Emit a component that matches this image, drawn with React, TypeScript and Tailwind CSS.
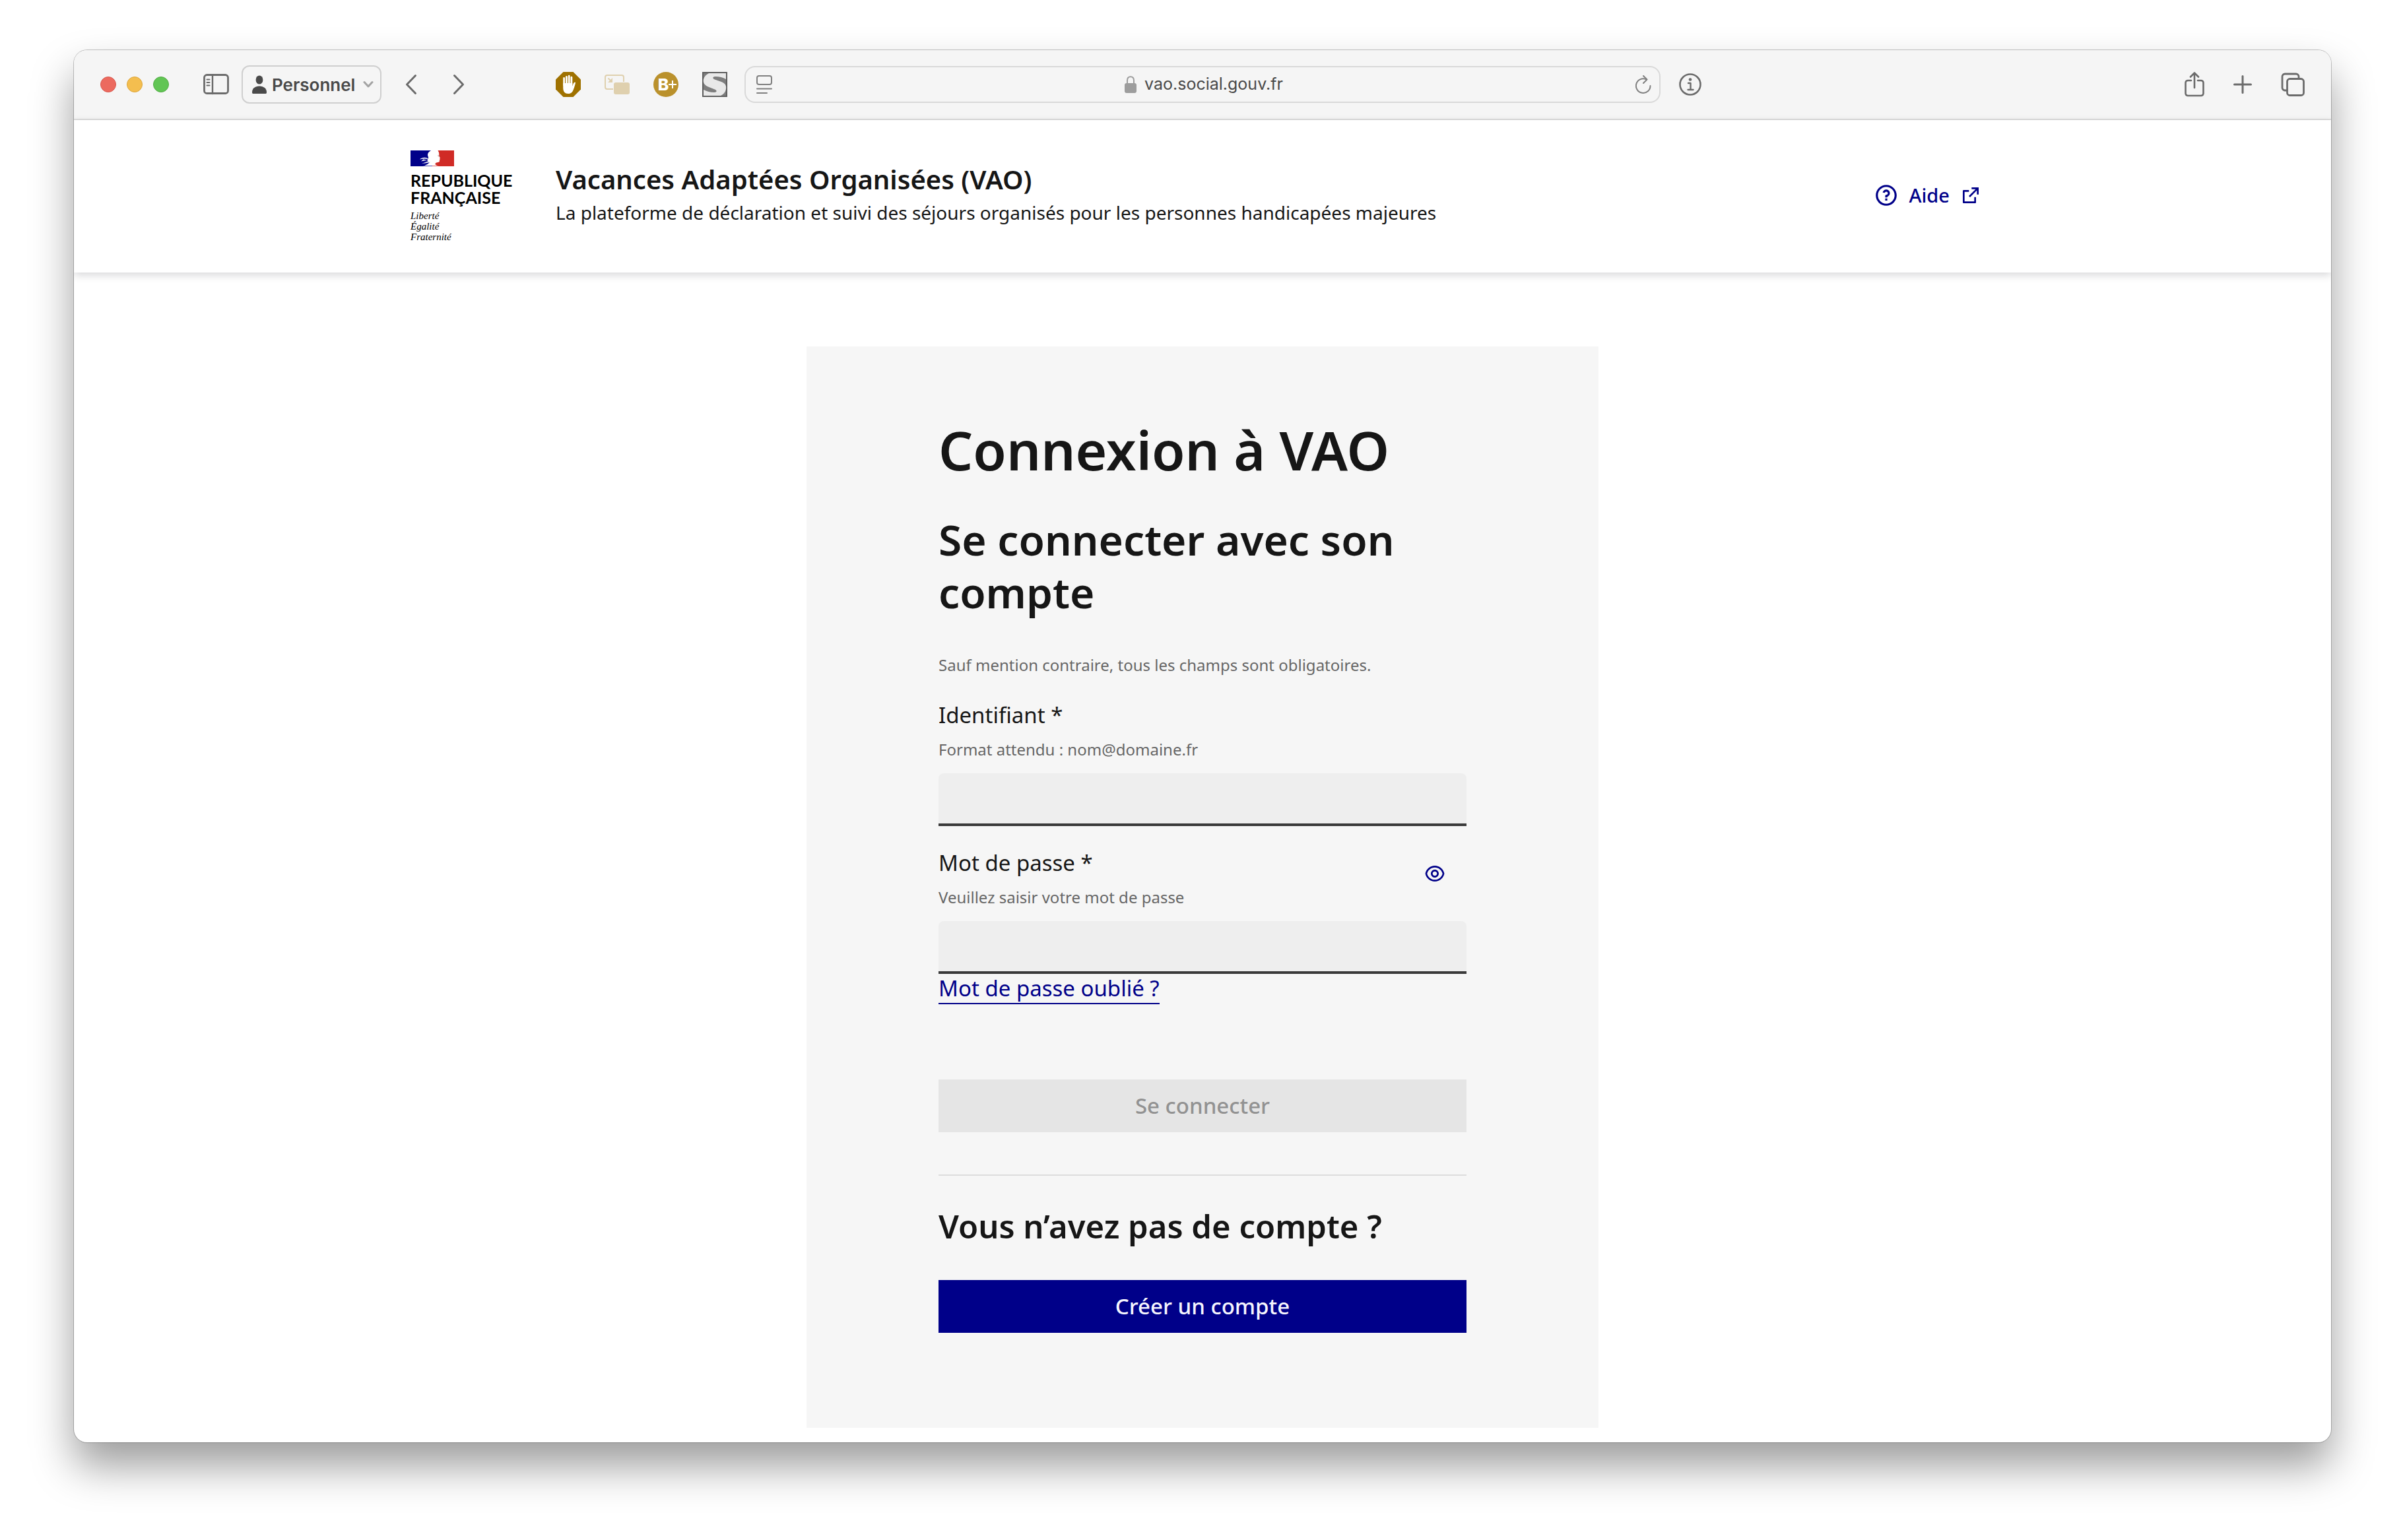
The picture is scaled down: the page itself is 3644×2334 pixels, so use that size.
import React, { useState } from "react";
import { RiEyeLine, RiQuestionLine, RiExternalLinkLine } from "react-icons/ri";

const stroke = {
  fill: "none",
  stroke: "currentColor",
  strokeLinecap: "round" as const,
  strokeLinejoin: "round" as const,
};

function SidebarIcon() {
  return (
    <svg width="40" height="38" viewBox="0 0 40 38" {...stroke} strokeWidth="2.800">
      <rect x="1.500" y="1.500" width="37" height="35" rx="4" />
      <path d="M14 2V36" strokeWidth="2.400" />
      <path d="M5.500 10.500H10M5.500 15.500H10M5.500 20.500H10" strokeWidth="2" />
    </svg>
  );
}

function PersonIcon() {
  return (
    <svg width="22" height="28" viewBox="0 0 22 28" fill="currentColor">
      <ellipse cx="11" cy="7" rx="5.400" ry="6.600" />
      <path d="M0 26C0 20 4.500 16.500 11 16.500S22 20 22 26C22 27.400 21.400 28 20 28H2C.6 28 0 27.400 0 26Z" />
    </svg>
  );
}

function AdBlockIcon() {
  return (
    <svg width="38" height="38" viewBox="0 0 38 38">
      <path d="M11.500 0H26.500L38 11.500V26.500L26.500 38H11.500L0 26.500V11.500Z" fill="#9f7100" />
      <g stroke="#fff" strokeWidth="2.800" strokeLinecap="round">
        <path d="M12.600 20V9.500M16.400 18V7.500M20.200 18V6.200M23.900 19V8.200" />
      </g>
      <path
        d="M11.200 17H25.300V21.500L26.800 17.500C27.500 16 29 15.300 30 16C29.700 19 28 24 26.500 27.500C25 31.500 22.500 33 18.800 33C14 33 11.200 30 11.200 24Z"
        fill="#fff"
      />
    </svg>
  );
}

function PipIcon() {
  return (
    <svg width="38" height="30" viewBox="0 0 38 30">
      <path
        d="M13 22H4A3 3 0 0 1 1 19V4A3 3 0 0 1 4 1H26A3 3 0 0 1 29 4V11"
        fill="none"
        stroke="#dfd0ae"
        strokeWidth="2"
      />
      <path d="M5.500 5.500L10 10" stroke="#dfd0ae" strokeWidth="2" />
      <path d="M12 5V12H5Z" fill="#dfd0ae" />
      <rect x="14" y="12" width="24" height="18" rx="3" fill="#dfd0ae" />
    </svg>
  );
}

function StylusIcon() {
  return (
    <svg width="38" height="38" viewBox="0 0 38 38">
      <rect x="1" y="1" width="36" height="36" fill="#7e7e7e" stroke="#5e5e5e" strokeWidth="2" />
      <path
        d="M10 2H36V11C31 8 24 6.500 19 7C15.500 7.500 15.500 10 19 11.500L29 15C35 17.500 37 21 36 26C35 31 32 34 28 36H2V27C8 30 14 31.500 19 31C22.500 30.500 22.500 28 19 26.500L9 22.500C3 20 1 16 2 11C3 7 6 4 10 2Z"
        fill="#e9e9e9"
      />
    </svg>
  );
}

function ReaderIcon() {
  return (
    <svg width="24" height="28" viewBox="0 0 24 28" {...stroke} strokeWidth="2">
      <rect x="1" y="1" width="22" height="13" rx="3" />
      <path d="M1 20.500H23M1 27H16" />
    </svg>
  );
}

function LockIcon() {
  return (
    <svg width="18" height="26" viewBox="0 0 18 26">
      <path d="M4 12V7C4 3.500 6 1.200 9 1.200S14 3.500 14 7V12" fill="none" stroke="#9d9d9d" strokeWidth="2" />
      <rect x="0" y="11" width="18" height="15" rx="3" fill="#9d9d9d" />
    </svg>
  );
}

function ReloadIcon() {
  return (
    <svg width="24" height="28" viewBox="0 0 24 28" {...stroke} strokeWidth="2">
      <path d="M22.500 16A10.800 10.800 0 1 1 16 6.200" />
      <path d="M12 1L17.500 6.500L12 12" />
    </svg>
  );
}

function InfoIcon() {
  return (
    <svg width="34" height="34" viewBox="0 0 34 34" {...stroke} strokeWidth="2.600">
      <circle cx="17" cy="17" r="15.500" />
      <circle cx="17" cy="9.500" r="2.300" fill="currentColor" stroke="none" />
      <path d="M14 15H17.500V25M13.500 25H21.500" strokeWidth="2.400" />
    </svg>
  );
}

function ShareIcon() {
  return (
    <svg width="30" height="38" viewBox="0 0 30 38" {...stroke} strokeWidth="2.600">
      <path d="M10 13H5A3.500 3.500 0 0 0 1.500 16.500V32.500A3.500 3.500 0 0 0 5 36H25A3.500 3.500 0 0 0 28.500 32.500V16.500A3.500 3.500 0 0 0 25 13H20" />
      <path d="M15 24V2M9 7.500L15 1.500L21 7.500" />
    </svg>
  );
}

function PlusIcon() {
  return (
    <svg width="28" height="28" viewBox="0 0 28 28" {...stroke} strokeWidth="3">
      <path d="M14 1.500V26.500M1.500 14H26.500" />
    </svg>
  );
}

function TabsIcon() {
  return (
    <svg width="36" height="36" viewBox="0 0 36 36" {...stroke} strokeWidth="2.800">
      <path d="M9 27H6A4 4 0 0 1 2 23V6A4 4 0 0 1 6 2H23A4 4 0 0 1 27 6V9" />
      <rect x="9.500" y="9.500" width="25" height="25" rx="4" />
    </svg>
  );
}

function RepublicFlag() {
  return (
    <svg width="66" height="24" viewBox="0 0 66 24">
      <path d="M0 0H31C28.500 1.500 26 3.500 26 6.500C26 9 27.500 10 27 12L25 15L29.500 17.500L27 21L19 24H0Z" fill="#000089" />
      <path d="M41.500 0H66V24H43C40.500 22.500 37 22 37.500 20.500C37.500 19 39 18.300 42.500 17.800C43.800 17.500 44 16.500 43.800 15.500L44.600 13.500L44 12.500L45 11.800L43.200 8.500C43.500 5.500 43.500 3 41.500 0Z" fill="#d02b26" />
      <path d="M14 13.500C17 10.800 21 10.200 25.500 11.500L27 13L22 12.500C19.500 12.400 17 12.800 14 13.500Z" fill="#fff" />
      <path d="M16 16.500L19.500 13.500L25 15L20.500 15.500ZM16.500 19.500C21 19 24 17 29 15.500L29.500 18C25 18.500 21 20 16.500 19.500Z" fill="#fff" />
      <path d="M19 24C22 22.500 26 21.500 29 18L30 23.200Z" fill="#fff" />
      <path d="M19 23.600H33" stroke="#000089" strokeWidth=".8" />
      <path d="M33 23.600H44" stroke="#d02b26" strokeWidth=".8" />
      <path d="M41.200 7.800H43M41.800 9H42.800" stroke="#8a8a8a" strokeWidth=".7" />
    </svg>
  );
}

function Toolbar() {
  return (
    <div className="flex h-[106px] items-center border-b-2 border-[#dcdcdc] bg-[#f5f5f5] px-10 text-[#6b6b6b]">
      <div className="flex flex-1 items-center">
        <div className="flex gap-4">
          <button aria-label="Fermer" className="size-6 rounded-full border border-[#d8584e] bg-[#ec6a5f]" />
          <button aria-label="Réduire" className="size-6 rounded-full border border-[#dca63c] bg-[#f4be4f]" />
          <button aria-label="Agrandir" className="size-6 rounded-full border border-[#52ab45] bg-[#61c554]" />
        </div>
        <button aria-label="Barre latérale" className="ml-[52px]">
          <svg width="40" height="32" viewBox="0 0 40 32" {...stroke} strokeWidth="2.800">
            <rect x="1.500" y="1.500" width="36" height="28" rx="4" />
            <path d="M14 2V30" strokeWidth="2.400" />
            <path d="M5.500 8.500H9.500M5.500 13H9.500M5.500 17.500H9.500" strokeWidth="2" />
          </svg>
        </button>
        <button className="ml-[18px] flex h-[58px] items-center rounded-xl border-2 border-[#cfcfcf] pr-[10px] pl-[14px] text-[26px] font-semibold text-[#4a4a4a]">
          <PersonIcon />
          <span className="mr-3 ml-2">Personnel</span>
          <svg width="16" height="12" viewBox="0 0 16 12" {...stroke} strokeWidth="3" className="text-[#a3a3a3]">
            <path d="M2 2.500L8 9L14 2.500" />
          </svg>
        </button>
        <button aria-label="Précédent" className="ml-9">
          <svg width="18" height="32" viewBox="0 0 18 32" {...stroke} strokeWidth="3">
            <path d="M15.500 2.500L2.500 16L15.500 29.500" />
          </svg>
        </button>
        <button aria-label="Suivant" className="ml-[54px]">
          <svg width="18" height="32" viewBox="0 0 18 32" {...stroke} strokeWidth="3">
            <path d="M2.500 2.500L15.500 16L2.500 29.500" />
          </svg>
        </button>
        <div className="mr-[26px] ml-auto flex items-center gap-9">
          <button aria-label="Bloqueur de publicité">
            <AdBlockIcon />
          </button>
          <button aria-label="Image dans l’image">
            <PipIcon />
          </button>
          <button
            aria-label="Extension B+"
            className="flex size-[38px] items-center justify-center rounded-full bg-[#ba912c] pl-1 text-[25px] leading-none font-extrabold text-white"
          >
            <span>B</span>
            <svg width="12" height="12" viewBox="0 0 12 12" stroke="#fff" strokeWidth="2">
              <path d="M6 0V12M0 6H12" />
            </svg>
          </button>
          <button aria-label="Extension de styles">
            <StylusIcon />
          </button>
        </div>
      </div>
      <div className="flex h-14 w-[1388px] items-center rounded-2xl border-2 border-[#d9d9d9] pr-3 pl-4 text-[#808080]">
        <button aria-label="Lecteur">
          <ReaderIcon />
        </button>
        <div className="flex flex-1 items-center justify-center gap-3">
          <LockIcon />
          <span className="text-[25px] text-[#4a4a4a]">vao.social.gouv.fr</span>
        </div>
        <button aria-label="Actualiser">
          <ReloadIcon />
        </button>
      </div>
      <div className="flex flex-1 items-center">
        <button aria-label="Informations" className="mr-auto ml-7">
          <InfoIcon />
        </button>
        <div className="flex items-center gap-11">
          <button aria-label="Partager">
            <ShareIcon />
          </button>
          <button aria-label="Nouvel onglet">
            <PlusIcon />
          </button>
          <button aria-label="Onglets">
            <TabsIcon />
          </button>
        </div>
      </div>
    </div>
  );
}

function SiteHeader() {
  return (
    <header className="bg-white py-[46px] shadow-[0_4px_12px_rgba(0,0,18,0.16)]">
      <div className="mx-auto flex max-w-[2400px] items-center">
        <div className="w-[220px] shrink-0 text-black">
          <RepublicFlag />
          <p className="mt-2 font-[Lato,sans-serif] text-[25px] leading-[26px] font-bold">
            REPUBLIQUE
            <br />
            FRANÇAISE
          </p>
          <p className="mt-[7px] font-['Liberation_Serif',serif] text-[15px] leading-4 italic">
            Liberté
            <br />
            Égalité
            <br />
            Fraternité
          </p>
        </div>
        <div className="flex-1 pb-2">
          <p className="text-[40px] leading-[56px] font-semibold">Vacances Adaptées Organisées (VAO)</p>
          <p className="text-[28px] leading-[44px]">
            La plateforme de déclaration et suivi des séjours organisés pour les personnes handicapées majeures
          </p>
        </div>
        <a href="#aide" className="flex items-center gap-4 pr-5 pb-1 text-[29px] font-medium text-[#000089]">
          <RiQuestionLine size={38} />
          Aide
          <RiExternalLinkLine size={32} />
        </a>
      </div>
    </header>
  );
}

const inputClass =
  "mt-4 h-20 w-full rounded-t-lg border-b-4 border-[#3a3a3a] bg-[#eeeeee] px-8 text-[33px] outline-none";
const labelClass = "block text-[33px] leading-[48px]";
const hintClass = "mt-2 text-[24px] leading-10 text-[#666666]";

function LoginCard() {
  const [visible, setVisible] = useState(false);
  return (
    <main className="mx-auto mt-28 mb-5 w-full max-w-[1200px] bg-[#f6f6f6] px-[200px] pt-[108px] pb-36">
      <h1 className="text-[82px] leading-[96px] font-semibold">Connexion à VAO</h1>
      <h2 className="mt-[49px] text-[64px] leading-[80px] font-semibold">Se connecter avec son compte</h2>
      <form onSubmit={(e) => e.preventDefault()}>
        <p className="mt-[50px] text-[24px] leading-10 text-[#666666]">
          Sauf mention contraire, tous les champs sont obligatoires.
        </p>
        <div className="mt-8">
          <label htmlFor="identifiant" className={labelClass}>
            Identifiant *
          </label>
          <p id="identifiant-hint" className={hintClass}>
            Format attendu : nom@domaine.fr
          </p>
        </div>
        <input id="identifiant" type="email" aria-describedby="identifiant-hint" className={inputClass} />
        <div className="mt-8 flex items-start justify-between">
          <div>
            <label htmlFor="motdepasse" className={labelClass}>
              Mot de passe *
            </label>
            <p id="motdepasse-hint" className={hintClass}>
              Veuillez saisir votre mot de passe
            </p>
          </div>
          <button
            type="button"
            aria-label="Afficher le mot de passe"
            onClick={() => setVisible(!visible)}
            className="mt-2 flex h-16 items-center px-8 text-[#000089]"
          >
            <RiEyeLine size={32} />
          </button>
        </div>
        <input
          id="motdepasse"
          type={visible ? "text" : "password"}
          aria-describedby="motdepasse-hint"
          className={inputClass}
        />
        <div className="flex">
          <a href="#oubli" className="border-b-2 border-[#000089] text-[33px] leading-[44px] text-[#000089]">
            Mot de passe oublié ?
          </a>
        </div>
        <button
          type="submit"
          disabled
          className="mt-[114px] h-20 w-full bg-[#e5e5e5] text-[33px] font-medium text-[#929292]"
        >
          Se connecter
        </button>
      </form>
      <hr className="mt-16 border-t-2 border-[#dddddd]" />
      <h2 className="mt-12 text-[49px] leading-[56px] font-semibold">Vous n’avez pas de compte ?</h2>
      <button type="button" className="mt-[54px] h-20 w-full bg-[#000089] text-[33px] font-medium text-[#f5f5fe]">
        Créer un compte
      </button>
    </main>
  );
}

export default function App() {
  return (
    <div className="flex min-h-screen flex-col bg-white px-28 pt-[76px] pb-[148px] font-['Noto_Sans',sans-serif] text-[#161616]">
      <div className="flex flex-1 flex-col overflow-hidden rounded-[20px] bg-white shadow-[0_0_0_1px_rgba(0,0,0,0.22),0_36px_64px_rgba(0,0,0,0.39)]">
        <div className="font-[Inter,sans-serif]">
          <Toolbar />
        </div>
        <SiteHeader />
        <LoginCard />
      </div>
    </div>
  );
}
